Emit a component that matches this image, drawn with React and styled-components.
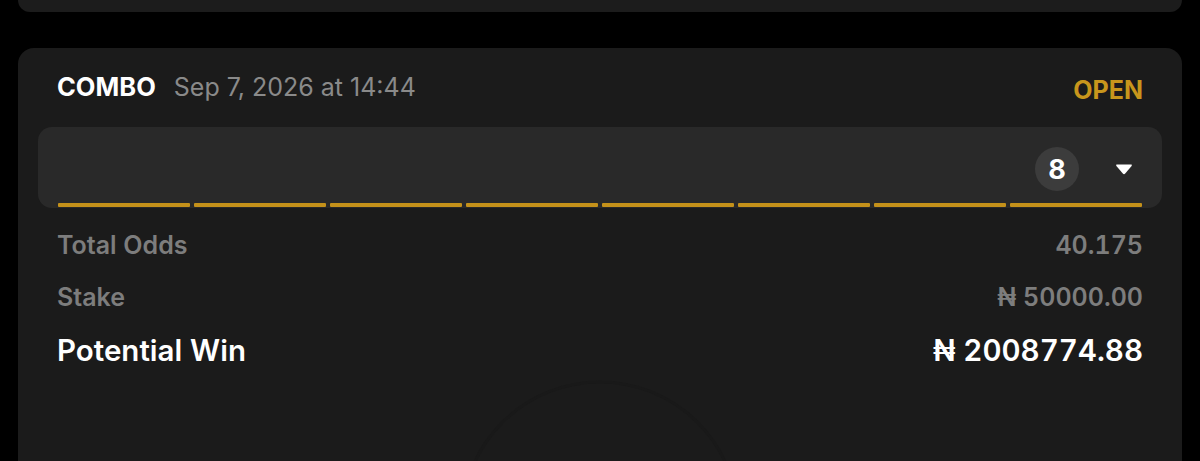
import React from "react";
import styled, { createGlobalStyle } from "styled-components";

const Global = createGlobalStyle`
  html, body { margin: 0; padding: 0; background: #000; }
  body { font-family: Inter, "Noto Sans", "Liberation Sans", sans-serif; -webkit-font-smoothing: antialiased; }
`;

const Page = styled.div`
  width: 1200px;
  height: 461px;
  overflow: hidden;
  background: #000;
  padding: 0 18px;
  box-sizing: border-box;
  display: flex;
  flex-direction: column;
  gap: 36px;
`;

const PrevCard = styled.div`
  height: 12px;
  background: #1c1c1c;
  border-radius: 0 0 16px 16px;
  flex-shrink: 0;
`;

const Card = styled.div`
  position: relative;
  flex: 1;
  background: #1b1b1b;
  border-radius: 16px 16px 0 0;
  padding: 24px 20px 0;
  overflow: hidden;
`;

const Header = styled.div`
  display: flex;
  align-items: center;
  justify-content: space-between;
  padding: 0 19px;
  height: 28px;
`;

const HeaderLeft = styled.div`
  display: flex;
  align-items: baseline;
  gap: 18px;
`;

const Type = styled.span`
  color: #fff;
  font-size: 25.5px;
  font-weight: 700;
`;

const DateText = styled.span`
  color: #8a8a8a;
  font-size: 25px;
  font-weight: 400;
`;

const Status = styled.span`
  color: #c8961c;
  font-size: 25px;
  font-weight: 700;
  margin-top: 8px;
`;

const Panel = styled.div`
  margin-top: 27px;
  background: #292929;
  border-radius: 14px;
  padding: 20px 20px 1px;
  display: flex;
  flex-direction: column;
  gap: 12px;
`;

const PanelTop = styled.div`
  display: flex;
  align-items: center;
  justify-content: flex-end;
  gap: 36px;
  padding-right: 9px;
`;

const CountBadge = styled.div`
  width: 44px;
  height: 44px;
  border-radius: 50%;
  background: #3c3c3c;
  color: #fff;
  font-size: 27px;
  font-weight: 700;
  display: flex;
  align-items: center;
  justify-content: center;
`;

const Bars = styled.div`
  display: grid;
  grid-template-columns: repeat(${(p) => p.$count}, 1fr);
  gap: 4px;
`;

const Bar = styled.div`
  height: 4px;
  background: #c4911a;
  border-radius: 1px;
`;

const Summary = styled.div`
  display: flex;
  flex-direction: column;
  padding: 11px 19px 0;
`;

const Row = styled.div`
  display: flex;
  align-items: center;
  justify-content: space-between;
  height: ${(p) => (p.$strong ? "54px" : "52px")};
  color: ${(p) => (p.$strong ? "#ffffff" : "#7d7d7d")};
  font-size: ${(p) => (p.$strong ? "29.5px" : "25px")};
  font-weight: 600;
  font-variant-numeric: tabular-nums;
`;

const Watermark = styled.svg`
  position: absolute;
  left: 50%;
  top: 322px;
  transform: translateX(-50%);
  pointer-events: none;
`;

const Caret = () => (
  <svg width="18" height="12" viewBox="0 0 18 12">
    <path d="M2 1.5 H16 Q17.6 1.5 16.6 2.9 L10.2 10.6 Q9 11.9 7.8 10.6 L1.4 2.9 Q0.4 1.5 2 1.5 Z" fill="#fff" />
  </svg>
);

export default function App() {
  const legs = 8;
  const rows = [
    { label: "Total Odds", value: "40.175" },
    { label: "Stake", value: "₦ 50000.00" },
    { label: "Potential Win", value: "₦ 2008774.88", strong: true },
  ];
  return (
    <>
      <Global />
      <Page>
        <PrevCard />
        <Card>
          <Watermark width="300" height="160" viewBox="0 0 300 160">
            <circle cx="150" cy="150" r="138" fill="none" stroke="#191919" strokeWidth="3" />
          </Watermark>
          <Header>
            <HeaderLeft>
              <Type>COMBO</Type>
              <DateText>Sep 7, 2026 at 14:44</DateText>
            </HeaderLeft>
            <Status>OPEN</Status>
          </Header>
          <Panel>
            <PanelTop>
              <CountBadge>{legs}</CountBadge>
              <Caret />
            </PanelTop>
            <Bars $count={legs}>
              {Array.from({ length: legs }).map((_, i) => (
                <Bar key={i} />
              ))}
            </Bars>
          </Panel>
          <Summary>
            {rows.map((r) => (
              <Row key={r.label} $strong={r.strong}>
                <span>{r.label}</span>
                <span>{r.value}</span>
              </Row>
            ))}
          </Summary>
        </Card>
      </Page>
    </>
  );
}
